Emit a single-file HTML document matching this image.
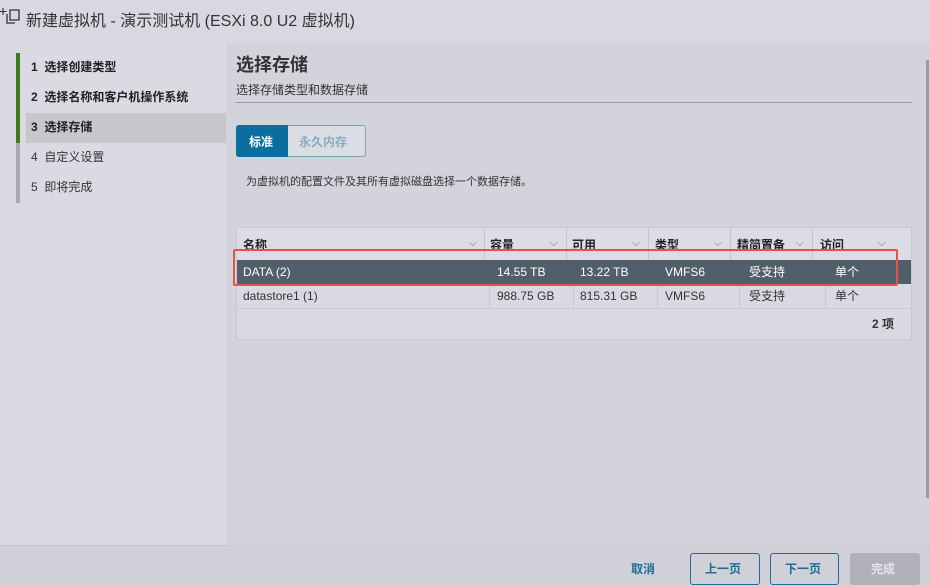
<!DOCTYPE html>
<html><head><meta charset="utf-8"><style>
*{margin:0;padding:0;box-sizing:border-box}
body{width:930px;height:585px;overflow:hidden;background:#d3d3dc;font-family:"Liberation Sans","Noto Sans CJK SC",sans-serif;color:#222;position:relative}
.a{position:absolute}
.t{position:absolute;white-space:nowrap}
</style></head><body>
<div class="a" style="left:0;top:0;width:930px;height:43px;background:#d7d8e0"></div>
<svg class="a" style="left:0;top:6px" width="22" height="20" viewBox="0 0 22 20"><path d="M3 2v7M0 5.5h6.5" stroke="#333" stroke-width="1.1"/><path d="M10 4h9v10h-9z" fill="none" stroke="#333" stroke-width="1.3"/><path d="M7 8v9h8" fill="none" stroke="#333" stroke-width="1.3"/></svg>
<div class="t" style="left:26px;top:7px;font-size:16px;color:#333">新建虚拟机 - 演示测试机 (ESXi 8.0 U2 虚拟机)</div>
<div class="a" style="left:0;top:43px;width:226px;height:502px;background:#dadae3"></div>
<div class="a" style="left:16px;top:53px;width:4px;height:90px;background:#3f7a1a"></div>
<div class="a" style="left:16px;top:143px;width:4px;height:60px;background:#a8a8ae"></div>
<div class="a" style="left:26px;top:113px;width:200px;height:30px;background:#c6c7cd"></div>
<div class="t" style="left:31px;top:58px;font-size:12px;font-weight:bold">1&nbsp; 选择创建类型</div>
<div class="t" style="left:31px;top:88px;font-size:12px;font-weight:bold">2&nbsp; 选择名称和客户机操作系统</div>
<div class="t" style="left:31px;top:118px;font-size:12px;font-weight:bold">3&nbsp; 选择存储</div>
<div class="t" style="left:31px;top:148px;font-size:12px;color:#333">4&nbsp; 自定义设置</div>
<div class="t" style="left:31px;top:178px;font-size:12px;color:#333">5&nbsp; 即将完成</div>
<div class="a" style="left:926px;top:60px;width:3px;height:438px;background:#9a9aa8"></div>
<div class="t" style="left:236px;top:51px;font-size:18px;font-weight:bold;color:#333">选择存储</div>
<div class="t" style="left:236px;top:81px;font-size:12px;color:#333">选择存储类型和数据存储</div>
<div class="a" style="left:236px;top:102px;width:676px;height:1px;background:#9a9aa6"></div>
<div class="a" style="left:236px;top:125px;width:130px;height:32px;border:1px solid #7fa2b8;border-radius:3px;background:#dcdde4"></div>
<div class="a" style="left:236px;top:125px;width:52px;height:32px;background:#0a6e9f;border-radius:3px 0 0 3px"></div>
<div class="t" style="left:249px;top:133px;font-size:12px;font-weight:bold;color:#fff">标准</div>
<div class="t" style="left:299px;top:133px;font-size:12px;font-weight:bold;color:#86abc2">永久内存</div>
<div class="t" style="left:246px;top:173px;font-size:11px;color:#333">为虚拟机的配置文件及其所有虚拟磁盘选择一个数据存储。</div>
<div class="a" style="left:236px;top:227px;width:676px;height:113px;background:#d9dae1;border:1px solid #c8c9d0;border-radius:2px"></div>
<div class="a" style="left:237px;top:228px;width:674px;height:32px;background:#dcdde4"></div>
<div class="a" style="left:484px;top:228px;width:1px;height:32px;background:#c4c5cc"></div>
<div class="a" style="left:566px;top:228px;width:1px;height:32px;background:#c4c5cc"></div>
<div class="a" style="left:648px;top:228px;width:1px;height:32px;background:#c4c5cc"></div>
<div class="a" style="left:730px;top:228px;width:1px;height:32px;background:#c4c5cc"></div>
<div class="a" style="left:812px;top:228px;width:1px;height:32px;background:#c4c5cc"></div>
<div class="t" style="left:243px;top:236px;font-size:12px;font-weight:bold">名称</div>
<div class="t" style="left:490px;top:236px;font-size:12px;font-weight:bold">容量</div>
<div class="t" style="left:572px;top:236px;font-size:12px;font-weight:bold">可用</div>
<div class="t" style="left:655px;top:236px;font-size:12px;font-weight:bold">类型</div>
<div class="t" style="left:737px;top:236px;font-size:12px;font-weight:bold">精简置备</div>
<div class="t" style="left:820px;top:236px;font-size:12px;font-weight:bold">访问</div>
<div class="t" style="left:469px;top:238px;font-size:10px;color:#666">⌵</div>
<div class="t" style="left:550px;top:238px;font-size:10px;color:#666">⌵</div>
<div class="t" style="left:632px;top:238px;font-size:10px;color:#666">⌵</div>
<div class="t" style="left:714px;top:238px;font-size:10px;color:#666">⌵</div>
<div class="t" style="left:796px;top:238px;font-size:10px;color:#666">⌵</div>
<div class="t" style="left:878px;top:238px;font-size:10px;color:#666">⌵</div>
<div class="a" style="left:237px;top:260px;width:674px;height:24px;background:#525f6b"></div>
<div class="t" style="left:243px;top:265px;font-size:12px;color:#fff">DATA (2)</div>
<div class="t" style="left:497px;top:265px;font-size:12px;color:#fff">14.55 TB</div>
<div class="t" style="left:580px;top:265px;font-size:12px;color:#fff">13.22 TB</div>
<div class="t" style="left:665px;top:265px;font-size:12px;color:#fff">VMFS6</div>
<div class="t" style="left:749px;top:263px;font-size:12px;color:#fff">受支持</div>
<div class="t" style="left:835px;top:263px;font-size:12px;color:#fff">单个</div>
<div class="a" style="left:237px;top:308px;width:674px;height:1px;background:#cacbd2"></div>
<div class="a" style="left:489px;top:284px;width:1px;height:24px;background:#c8c9d0"></div>
<div class="a" style="left:573px;top:284px;width:1px;height:24px;background:#c8c9d0"></div>
<div class="a" style="left:657px;top:284px;width:1px;height:24px;background:#c8c9d0"></div>
<div class="a" style="left:739px;top:284px;width:1px;height:24px;background:#c8c9d0"></div>
<div class="a" style="left:825px;top:284px;width:1px;height:24px;background:#c8c9d0"></div>
<div class="t" style="left:243px;top:289px;font-size:12px;color:#333">datastore1 (1)</div>
<div class="t" style="left:497px;top:289px;font-size:12px;color:#333">988.75 GB</div>
<div class="t" style="left:580px;top:289px;font-size:12px;color:#333">815.31 GB</div>
<div class="t" style="left:665px;top:289px;font-size:12px;color:#333">VMFS6</div>
<div class="t" style="left:749px;top:287px;font-size:12px;color:#333">受支持</div>
<div class="t" style="left:835px;top:287px;font-size:12px;color:#333">单个</div>
<div class="t" style="left:872px;top:315px;font-size:12px;font-weight:bold;color:#333">2 项</div>
<div class="a" style="left:233px;top:249px;width:665px;height:37px;border:2px solid #e8504a;border-radius:2px"></div>
<div class="a" style="left:0;top:545px;width:930px;height:40px;background:#d0d0d9;border-top:1px solid #c8c8d1"></div>
<div class="t" style="left:631px;top:560px;font-size:12px;font-weight:bold;color:#1f6c99">取消</div>
<div class="a" style="left:690px;top:553px;width:70px;height:32px;border:1px solid #1f6c99;border-radius:3px"></div>
<div class="t" style="left:705px;top:560px;font-size:12px;font-weight:bold;color:#1f6c99">上一页</div>
<div class="a" style="left:770px;top:553px;width:69px;height:32px;border:1px solid #1f6c99;border-radius:3px"></div>
<div class="t" style="left:785px;top:560px;font-size:12px;font-weight:bold;color:#1f6c99">下一页</div>
<div class="a" style="left:850px;top:553px;width:70px;height:32px;background:#b1b1b9;border-radius:3px"></div>
<div class="t" style="left:871px;top:560px;font-size:12px;font-weight:bold;color:#e6e6ea">完成</div>
</body></html>
